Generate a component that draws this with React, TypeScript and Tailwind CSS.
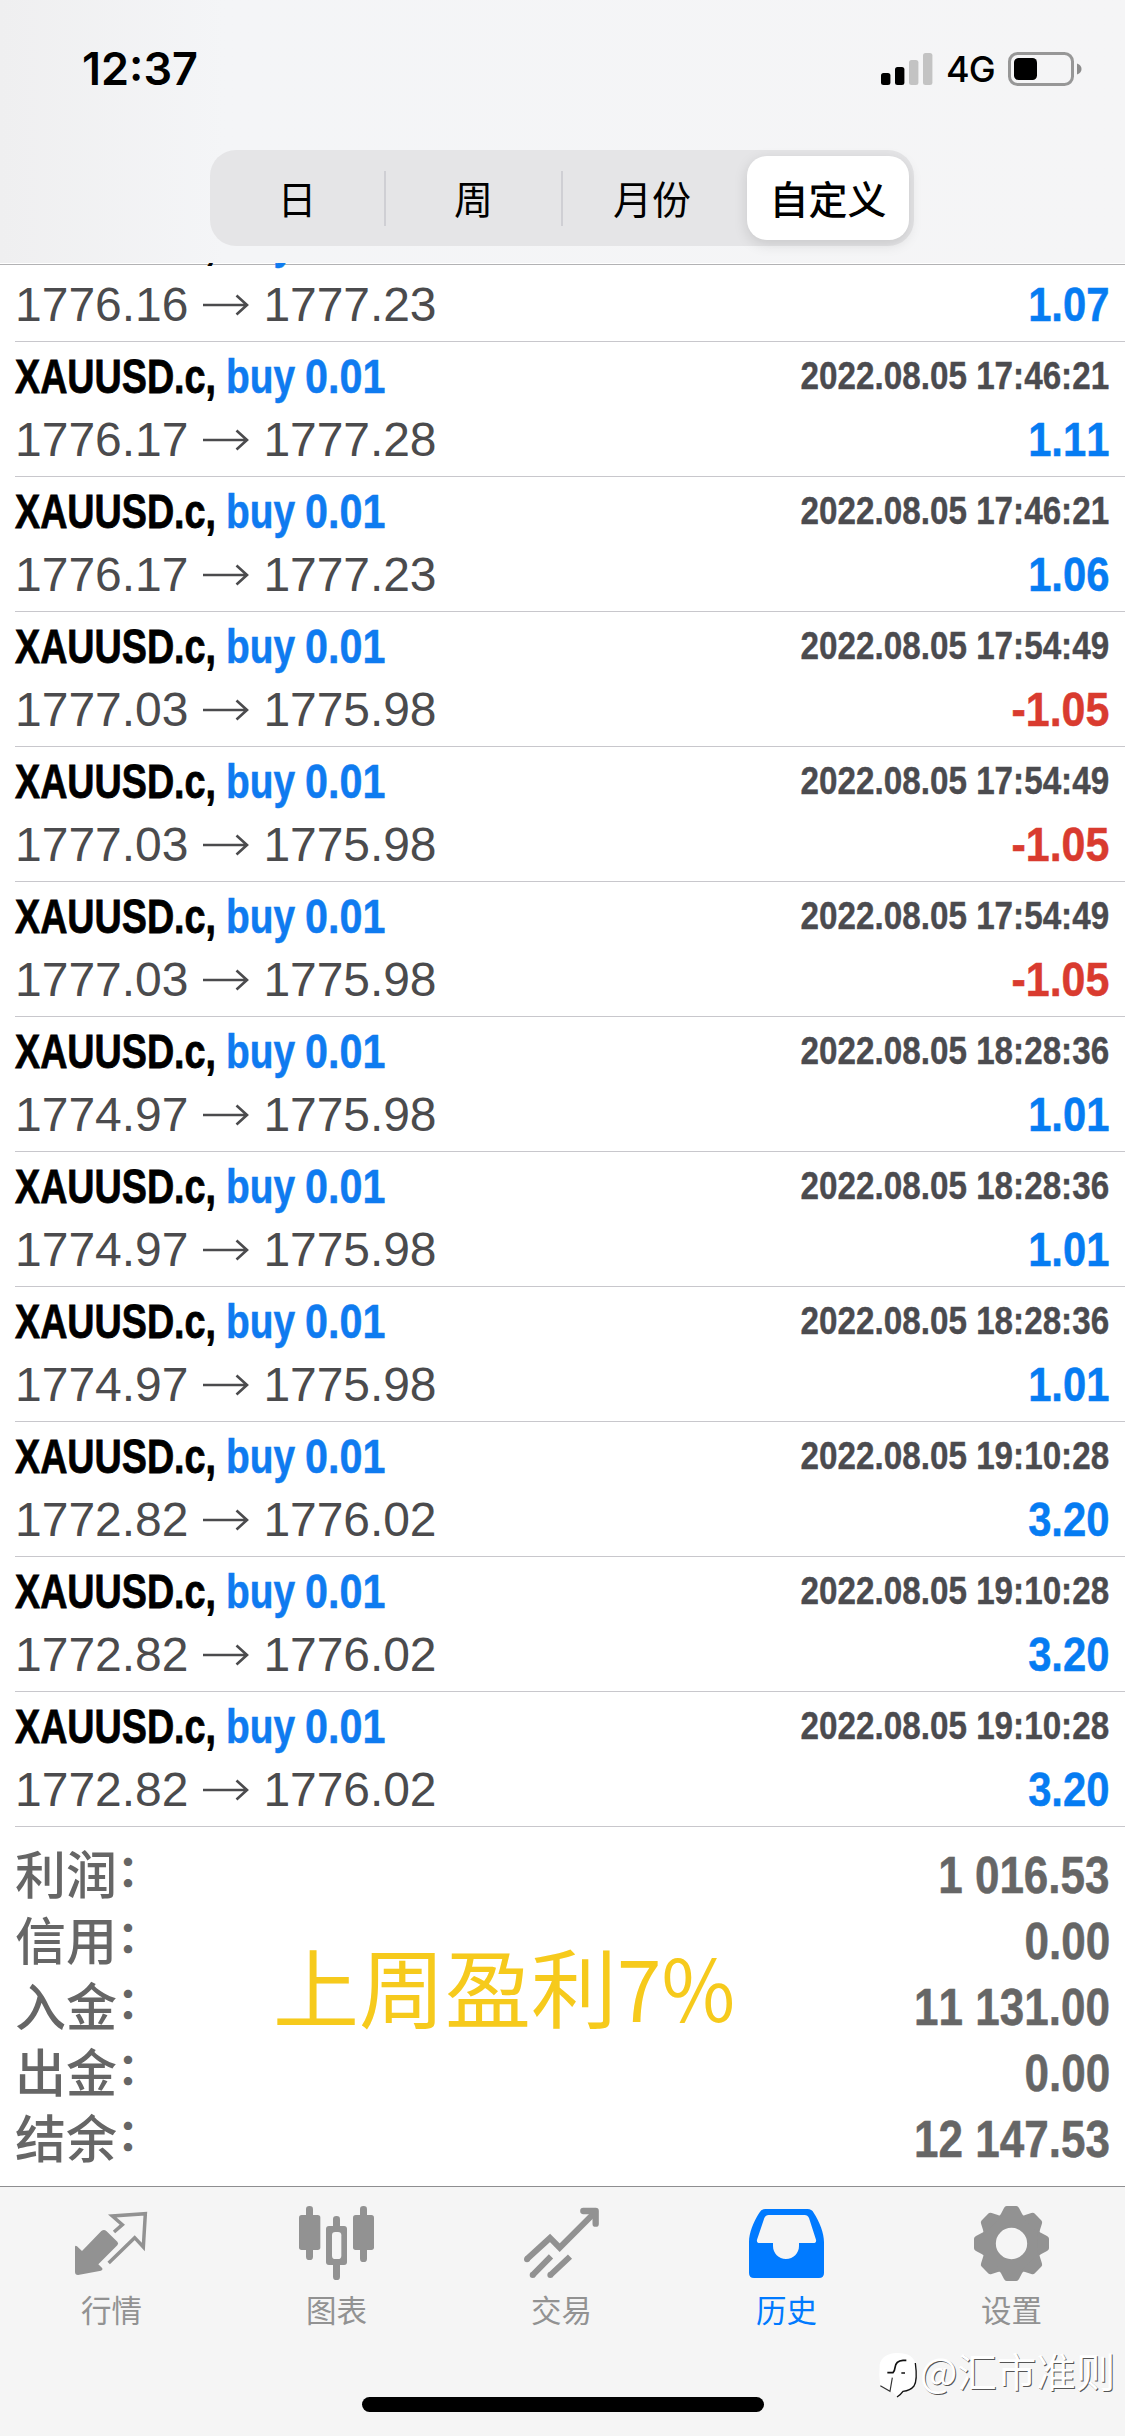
import type { ReactNode } from "react";

type Trade = { open: string; close: string; time: string; profit: string };

const trades: Trade[] = [
  { open: "1776.16", close: "1777.23", time: "2022.08.05 17:46:21", profit: "1.07" },
  { open: "1776.17", close: "1777.28", time: "2022.08.05 17:46:21", profit: "1.11" },
  { open: "1776.17", close: "1777.23", time: "2022.08.05 17:46:21", profit: "1.06" },
  { open: "1777.03", close: "1775.98", time: "2022.08.05 17:54:49", profit: "-1.05" },
  { open: "1777.03", close: "1775.98", time: "2022.08.05 17:54:49", profit: "-1.05" },
  { open: "1777.03", close: "1775.98", time: "2022.08.05 17:54:49", profit: "-1.05" },
  { open: "1774.97", close: "1775.98", time: "2022.08.05 18:28:36", profit: "1.01" },
  { open: "1774.97", close: "1775.98", time: "2022.08.05 18:28:36", profit: "1.01" },
  { open: "1774.97", close: "1775.98", time: "2022.08.05 18:28:36", profit: "1.01" },
  { open: "1772.82", close: "1776.02", time: "2022.08.05 19:10:28", profit: "3.20" },
  { open: "1772.82", close: "1776.02", time: "2022.08.05 19:10:28", profit: "3.20" },
  { open: "1772.82", close: "1776.02", time: "2022.08.05 19:10:28", profit: "3.20" },
];

const totals = [
  ["利润", "1 016.53"],
  ["信用", "0.00"],
  ["入金", "11 131.00"],
  ["出金", "0.00"],
  ["结余", "12 147.53"],
];

function StatusBar() {
  return (
    <div className="flex h-[132px] items-start justify-between pl-[82px] pr-[43px] pt-[46px]">
      <span className="font-['Inter',sans-serif] text-[45px] font-semibold leading-[46px] text-black">12:37</span>
      <div className="flex h-[46px] items-center">
        <svg width="52" height="32" viewBox="0 0 52 32">
          <rect x="0" y="20" width="9.4" height="12" rx="2.5" fill="#000" />
          <rect x="14" y="14" width="9.4" height="18" rx="2.5" fill="#000" />
          <rect x="28" y="7" width="9.4" height="25" rx="2.5" fill="#c3c3c3" />
          <rect x="42" y="0" width="9.4" height="32" rx="2.5" fill="#c3c3c3" />
        </svg>
        <span className="ml-[13px] w-[62px] font-['Inter',sans-serif] text-[36px] font-medium leading-[48px] tracking-[-1px] text-black">4G</span>
        <svg width="74" height="34" viewBox="0 0 74 34">
          <rect x="1.5" y="1.5" width="63" height="31" rx="8" fill="none" stroke="#979797" strokeWidth="3" />
          <rect x="6" y="6" width="23" height="22" rx="4.5" fill="#000" />
          <path d="M69 11.5c3.200 1 4.500 3 4.500 5.500s-1.300 4.500-4.500 5.500z" fill="#8c8c8c" />
        </svg>
      </div>
    </div>
  );
}

function Segments() {
  return (
    <div className="ml-[210px] mt-[18px] flex h-[96px] w-[704px] items-center rounded-[26px] bg-[#e5e5e7] font-['Noto_Sans_CJK_SC',sans-serif] text-[39px] leading-[52px] text-black">
      <span className="w-[174px] pb-[3px] text-center">日</span>
      <span className="h-[55px] w-[2px] bg-[#cfcfd4]" />
      <span className="w-[175px] pb-[3px] text-center">周</span>
      <span className="h-[55px] w-[2px] bg-[#cfcfd4]" />
      <span className="w-[178px] pb-[3px] text-center">月份</span>
      <span className="ml-[6px] flex h-[84px] w-[162px] items-center justify-center rounded-[20px] bg-white pb-[3px] font-medium shadow-[0_4px_14px_rgba(0,0,0,0.13)]">
        自定义
      </span>
    </div>
  );
}

function Arrow() {
  return (
    <svg className="ml-[13px] mr-[14px] shrink-0" width="48" height="24" viewBox="0 0 48 24" fill="none" stroke="#4b4b4d" strokeWidth="2.6">
      <path d="M1 12H45M34.500 2.500 45 12 34.500 21.500" />
    </svg>
  );
}

function TradeRow({ trade }: { trade: Trade }) {
  const loss = trade.profit.startsWith("-");
  return (
    <li className="ml-[15px] flex h-[135px] shrink-0 flex-col border-b border-[#c8c7cc] pr-[16px] pb-2">
      <div className="flex h-[69px] justify-between whitespace-nowrap font-bold leading-[69px]">
        <div className="flex text-[48px]">
          <span className="w-[211px] text-black [-webkit-text-stroke:0.8px_#000]">
            <span className="inline-block origin-left scale-x-[0.785]">XAUUSD.c,</span>
          </span>
          <span className="w-[79px] text-[#0f7bf0] [-webkit-text-stroke:0.5px_#0f7bf0]">
            <span className="inline-block origin-left scale-x-[0.81]">buy</span>
          </span>
          <span className="text-[#0f7bf0] [-webkit-text-stroke:0.5px_#0f7bf0]">
            <span className="inline-block origin-left scale-x-[0.86]">0.01</span>
          </span>
        </div>
        <span className="inline-block origin-right scale-x-[0.852] text-[39px] leading-[67px] text-[#4b4b4f] [-webkit-text-stroke:0.4px_#4b4b4f]">{trade.time}</span>
      </div>
      <div className="flex h-[57px] justify-between whitespace-nowrap text-[48px] leading-[57px]">
        <div className="flex items-center text-[#4b4b4d]">
          <span>{trade.open}</span>
          <Arrow />
          <span className="tracking-[-0.1px]">{trade.close}</span>
        </div>
        {loss ? (
          <span className="inline-block origin-right scale-x-[0.895] font-bold text-[#d93b2f] [-webkit-text-stroke:0.5px_#d93b2f]">{trade.profit}</span>
        ) : (
          <span className="inline-block origin-right scale-x-[0.87] font-bold text-[#067cf2] [font-kerning:none] [-webkit-text-stroke:0.5px_#067cf2]">{trade.profit}</span>
        )}
      </div>
    </li>
  );
}

function Summary() {
  return (
    <section className="relative h-[359px] pl-[15px] pr-[15px] pt-[15px] text-[#666]">
      {totals.map(([label, value]) => (
        <div key={label} className="flex h-[66px] justify-between whitespace-nowrap text-[51px]">
          <span className="flex font-['Noto_Sans_CJK_SC',sans-serif] font-medium leading-[60px]">
            {label}
            <span className="text-[44px] font-bold leading-[53px]">：</span>
          </span>
          <span className="inline-block origin-right scale-x-[0.863] font-bold leading-[67px] [font-kerning:none] [-webkit-text-stroke:0.5px_#666]">{value}</span>
        </div>
      ))}
      <p className="absolute left-[273px] top-[98px] flex whitespace-nowrap font-['Noto_Sans_CJK_SC',sans-serif] text-[86px] leading-[120px] text-[#f6ca1c]">
        上周盈利<span className="inline-block origin-left scale-x-[0.93]">7%</span>
      </p>
    </section>
  );
}

function QuotesIcon() {
  return (
    <svg width="75" height="75" viewBox="222 78 225 225">
      <path d="M304 153q8-6 15 0l33 32q5 5 0 11L295 253l12 12q2 6-4 7L234 285q-9 0-9-9V200q1-5 6-1l15 14z" fill="#929292" />
      <path d="M342 156 367 134 337 108 436 101 430 201 404 173 326 249" fill="none" stroke="#929292" strokeWidth="10.500" />
    </svg>
  );
}

function ChartIcon() {
  return (
    <svg width="75" height="75" viewBox="897 78 225 225" fill="#929292">
      <rect x="918" y="78" width="21" height="162" rx="10" />
      <rect x="897" y="105" width="64" height="105" rx="8" />
      <rect x="1080" y="78" width="21" height="168" rx="10" />
      <rect x="1059" y="105" width="63" height="105" rx="8" />
      <rect x="999" y="108" width="21" height="60" rx="10" />
      <rect x="999" y="225" width="21" height="75" rx="10" />
      <rect x="978" y="138" width="63" height="117" rx="9" />
      <rect x="996" y="156" width="28" height="81" rx="10" fill="#f5f5f5" />
    </svg>
  );
}

function TradeIcon() {
  return (
    <svg width="75" height="75" viewBox="312 78 225 225" fill="none" stroke="#929292" strokeWidth="18">
      <path d="M321 237 390 174 419 203 527 95" strokeLinejoin="miter" />
      <path d="M490 93H527V131" strokeLinecap="round" strokeLinejoin="round" strokeWidth="19" />
      <circle cx="321" cy="238" r="9" fill="#929292" stroke="none" />
      <path d="M337 286 393 229M390 286 450 230" />
      <circle cx="338" cy="285" r="9" fill="#929292" stroke="none" />
      <circle cx="391" cy="285" r="9" fill="#929292" stroke="none" />
    </svg>
  );
}

function HistoryIcon() {
  return (
    <svg width="75" height="75" viewBox="987 78 225 225">
      <path
        d="M1036 87H1163q12 0 18 11c18 28 31 60 31 88v93q0 15-15 15H1002q-15 0-15-15v-93c0-28 13-60 31-88q6-11 18-11zM1046 105q-9 0-13 9L1011 179q-2 10 8 10h40v9c0 22 17 39 39 39s39-17 39-39v-9h43q10 0 8-10L1167 114q-4-9-13-9z"
        fill="#007aff"
        fillRule="evenodd"
      />
    </svg>
  );
}

function SettingsIcon() {
  return (
    <svg width="75" height="75" viewBox="402 78 225 225">
      <circle cx="514.500" cy="190.500" r="67" fill="none" stroke="#929292" strokeWidth="40" />
      {[0, 45, 90, 135, 180, 225, 270, 315].map((angle) => (
        <path
          key={angle}
          d="M500 78h29q5 0 8 6l9 17q3 8 12 11H471q9-3 12-11l9-17q3-6 8-6z"
          fill="#929292"
          transform={`rotate(${angle} 514.5 190.5)`}
        />
      ))}
    </svg>
  );
}

function Tab({ label, active, children }: { label: string; active?: boolean; children: ReactNode }) {
  return (
    <div className="flex w-[225px] flex-col items-center">
      {children}
      <span className={active ? "mt-[8px] text-[#007aff]" : "mt-[8px] text-[#929292]"}>{label}</span>
    </div>
  );
}

function Watermark() {
  return (
    <div className="absolute left-[877px] top-[164px] flex items-start">
      <svg width="42" height="48" viewBox="0 0 126 144">
        <path d="M8 40Q16 8 58 6Q110 5 115 40Q120 92 108 108Q98 120 76 121Q64 126 60 139Q55 130 46 122H38L10 106Q5 70 8 40z" fill="#fff" />
        <path d="M115 36Q122 88 111 105Q100 119 78 121Q72 130 60 138" fill="none" stroke="#111" strokeWidth="4" />
        <path d="M88 28H78Q56 29 54 50Q53 60 48 65H31M73 66H84" fill="none" stroke="#111" strokeWidth="5" />
        <path d="M46 80 39 121 10 104" fill="none" stroke="#333" strokeWidth="3.500" />
      </svg>
      <span className="ml-[1px] -mt-[7px] whitespace-nowrap font-['Noto_Sans_CJK_SC',sans-serif] text-[39.500px] font-normal leading-[52px] text-white [text-shadow:1px_1px_0_#555]">@汇市准则</span>
    </div>
  );
}

export default function App() {
  return (
    <main className="relative flex h-[2436px] w-[1125px] flex-col overflow-hidden bg-white font-['Liberation_Sans',sans-serif]">
      <header className="relative h-[263px] shrink-0 bg-linear-to-r from-[#efeff0] via-[#f4f5f7] via-20% to-[#f5f5f6]">
        <StatusBar />
        <Segments />
        <div className="absolute inset-x-0 -bottom-[2px] h-px bg-[#b2b2b4]" />
      </header>
      <ul className="flex h-[1564px] shrink-0 flex-col justify-end overflow-hidden">
        {trades.map((trade, i) => (
          <TradeRow key={i} trade={trade} />
        ))}
      </ul>
      <Summary />
      <nav className="relative h-[250px] shrink-0 border-t border-[#8e8e90] bg-[#f5f5f5]">
        <div className="-ml-px flex w-[1125px] pt-[19px] font-['Noto_Sans_CJK_SC',sans-serif] text-[30.500px] leading-[40px]">
          <Tab label="行情"><QuotesIcon /></Tab>
          <Tab label="图表"><ChartIcon /></Tab>
          <Tab label="交易"><TradeIcon /></Tab>
          <Tab label="历史" active><HistoryIcon /></Tab>
          <Tab label="设置"><SettingsIcon /></Tab>
        </div>
        <div className="mx-auto mt-[68px] h-[15px] w-[402px] rounded-full bg-black" />
        <Watermark />
      </nav>
    </main>
  );
}
